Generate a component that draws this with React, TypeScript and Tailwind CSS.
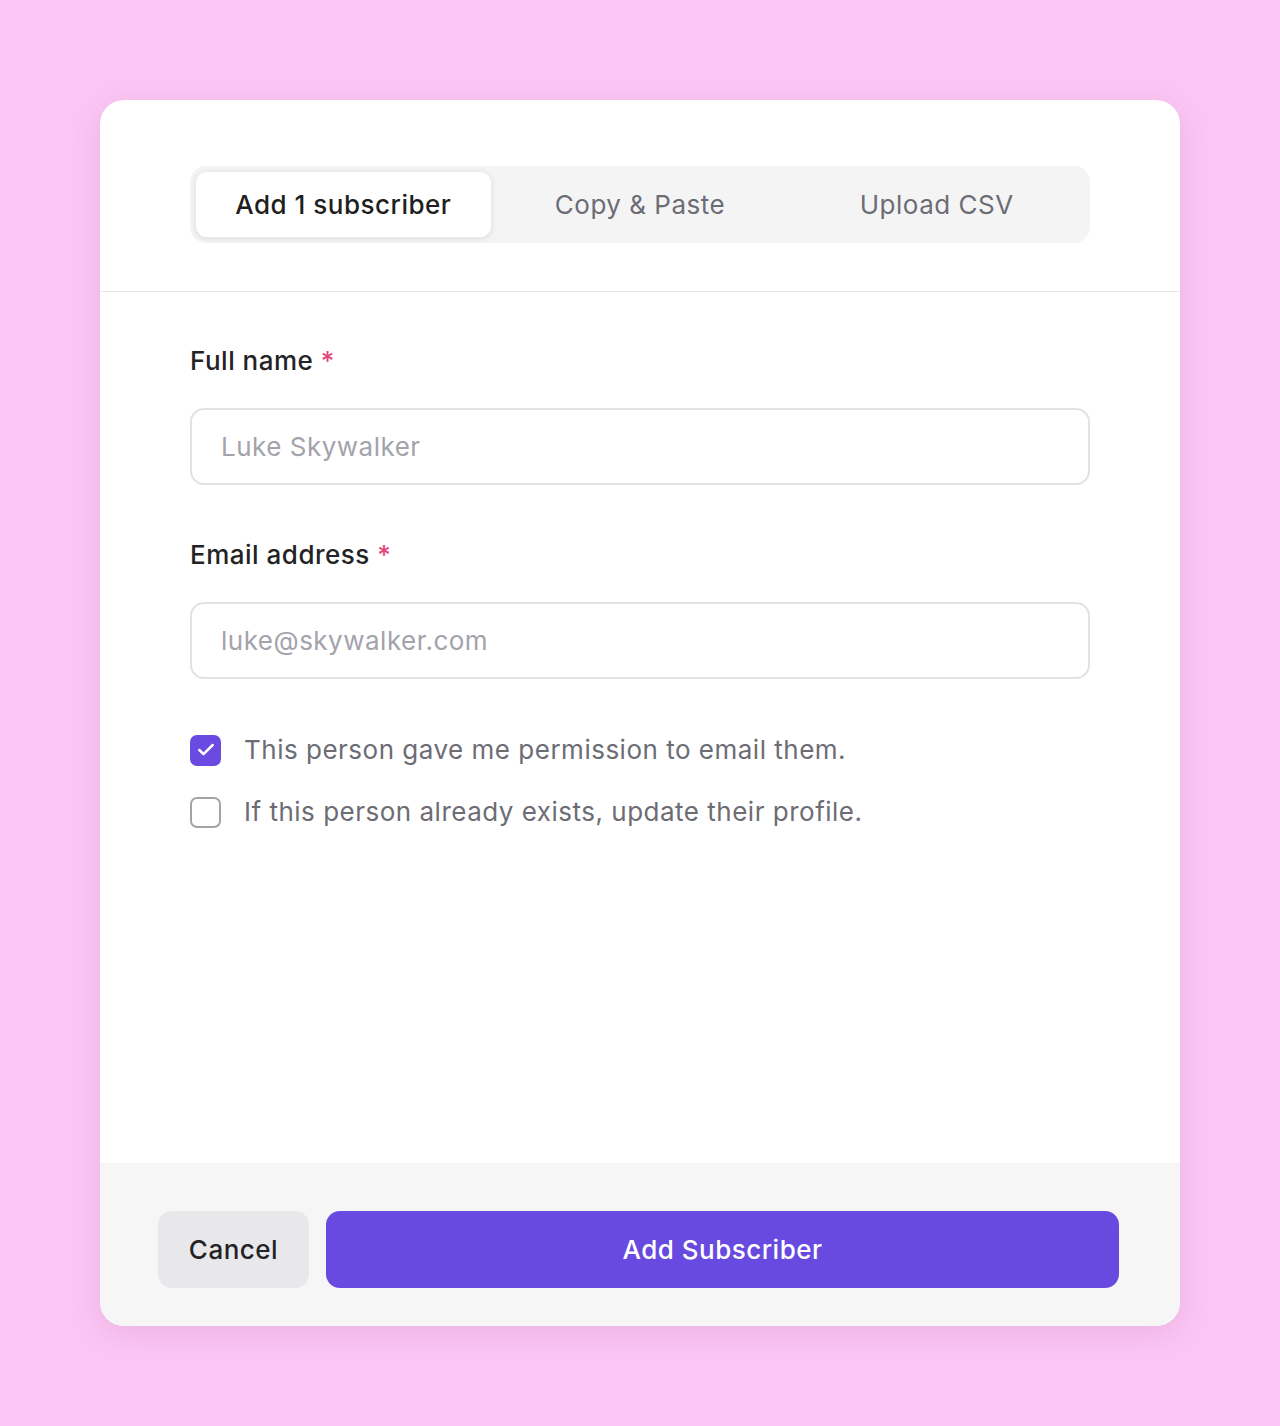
import { Check } from "lucide-react";

function Field({ label, placeholder }: { label: string; placeholder: string }) {
  return (
    <div className="flex flex-col gap-[31px]">
      <label className="text-[26px] leading-[32px] font-medium text-[#232326]">
        {label} <span className="text-[#e5437d]">*</span>
      </label>
      <input
        placeholder={placeholder}
        className="h-[77px] w-full rounded-[14px] border-2 border-[#e2e2e5] bg-white px-[29px] text-[26px] tracking-[0.5px] text-[#232326] outline-none placeholder:text-[#a3a3ab]"
      />
    </div>
  );
}

export default function App() {
  const tabs = ["Add 1 subscriber", "Copy & Paste", "Upload CSV"];

  return (
    <div className="min-h-[1426px] bg-[#fbc6f4] pt-[100px] font-['Inter',sans-serif] tracking-[0.5px]">
      <div className="mx-auto flex h-[1226px] w-[1080px] flex-col overflow-hidden rounded-[24px] bg-white shadow-[0_8px_30px_rgba(120,40,110,0.12)]">
        {/* Tabs */}
        <div className="border-b border-[#e7e7ea] px-[90px] pt-[66px] pb-[48px]">
          <div className="grid h-[77px] grid-cols-3 rounded-[16px] bg-[#f4f4f5] p-[5px]">
            {tabs.map((tab, i) => (
              <button
                key={tab}
                className={`rounded-[12px] text-[26px] tracking-[0.5px] ${
                  i === 0
                    ? "border border-[#ececee] bg-white font-medium text-[#1f1f22] shadow-[0_1px_4px_rgba(0,0,0,0.1)]"
                    : "text-[#6c6c75]"
                }`}
              >
                {tab}
              </button>
            ))}
          </div>
        </div>

        {/* Form */}
        <div className="flex flex-1 flex-col px-[90px] pt-[53px]">
          <div className="flex flex-col gap-[54px]">
            <Field label="Full name" placeholder="Luke Skywalker" />
            <Field label="Email address" placeholder="luke@skywalker.com" />
          </div>

          <div className="mt-[55px] flex flex-col gap-[30px]">
            <div className="flex items-center gap-[23px]">
              <span className="flex h-[31px] w-[31px] items-center justify-center rounded-[7px] bg-[#6a4ae0]">
                <Check className="h-[20px] w-[20px] text-white" strokeWidth={3} />
              </span>
              <span className="text-[26px] leading-[32px] text-[#6c6c75]">
                This person gave me permission to email them.
              </span>
            </div>
            <div className="flex items-center gap-[23px]">
              <span className="h-[31px] w-[31px] rounded-[7px] border-2 border-[#a3a3aa] bg-white" />
              <span className="text-[26px] leading-[32px] text-[#6c6c75]">
                If this person already exists, update their profile.
              </span>
            </div>
          </div>
        </div>

        {/* Footer */}
        <div className="flex h-[163px] gap-[17px] bg-[#f6f6f7] pt-[48px] pb-[38px] pl-[58px] pr-[61px]">
          <button className="h-[77px] w-[151px] rounded-[14px] bg-[#e8e8eb] text-[26px] font-medium tracking-[0.5px] text-[#232326]">
            Cancel
          </button>
          <button className="h-[77px] flex-1 rounded-[14px] bg-[#684ae0] text-[26px] font-medium tracking-[0.5px] text-white">
            Add Subscriber
          </button>
        </div>
      </div>
    </div>
  );
}
